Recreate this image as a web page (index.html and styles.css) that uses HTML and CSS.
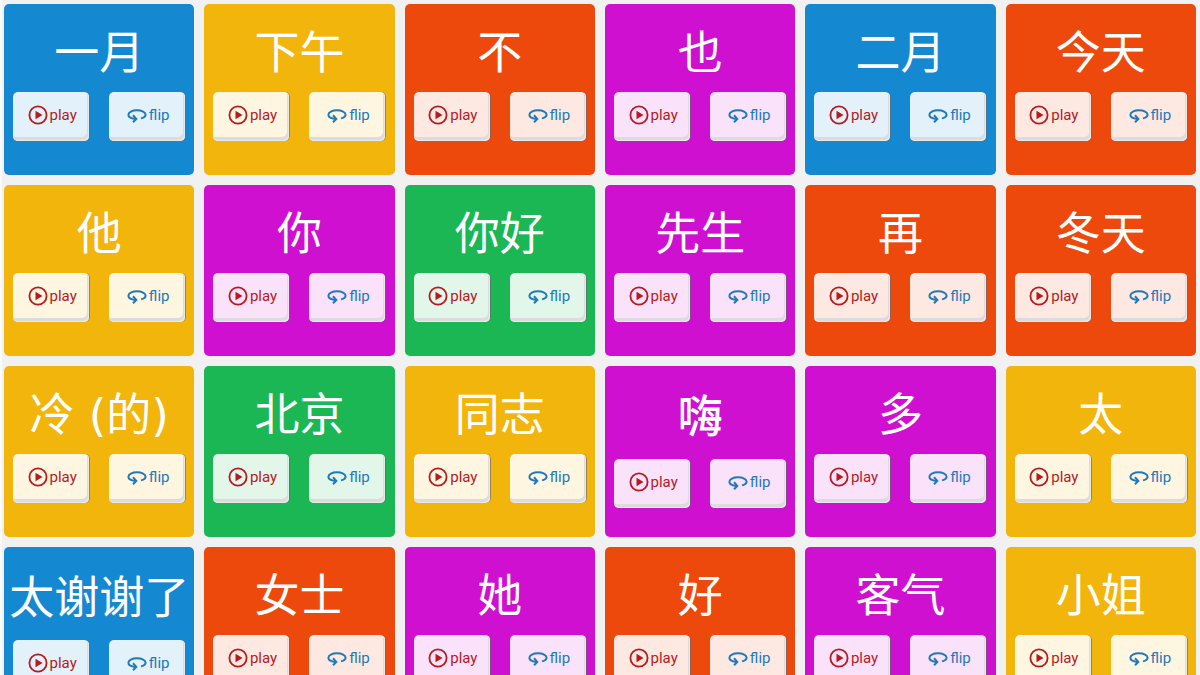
FILE: index.html
```
<!DOCTYPE html>
<html lang="zh-CN">
<head>
  <meta charset="UTF-8" />
  <meta name="viewport" content="width=device-width, initial-scale=1" />
  <title>Flashcards</title>
  <link rel="stylesheet" href="styles.css">
</head>
<body>

  <main id="cards" class="cards"></main>

  <script src="cards.js"></script>
</body>
</html>
```
FILE: styles.css
```
* {
  box-sizing: border-box;
}

body {
  margin: 0;
  background: #f1f1f1;
  border-left: 2px solid #fafafa;
  font-family: Roboto, "Noto Sans CJK SC", sans-serif;
}

.cards {
  display: grid;
  grid-template-columns: repeat(6, minmax(0, 1fr));
  gap: 10px;
  padding: 4px 4px 4px 2px;
}

.card {
  min-height: 171px;
  padding: 18px 9px;
  border-radius: 5px;
}

.blue {
  background: #1489d2;
}

.yellow {
  background: #f2b50c;
}

.red {
  background: #ee490c;
}

.purple {
  background: #d010d0;
}

.green {
  background: #1ab754;
}

.word {
  margin: 0 -9px 7px;
  color: #fff;
  font-family: "DejaVu Sans", "Noto Sans CJK SC", sans-serif;
  font-size: 45px;
  font-weight: 400;
  line-height: 63px;
  text-align: center;
  white-space: nowrap;
}

.word.tall {
  line-height: 68px;
}

.word.medium {
  font-weight: 500;
}

.actions {
  display: flex;
  justify-content: center;
  gap: 20px;
}

.btn {
  display: flex;
  align-items: center;
  justify-content: center;
  gap: 2px;
  width: 76px;
  height: 49px;
  padding: 0 0 3px 2px;
  border: none;
  border-radius: 5px;
  background: rgba(255, 255, 255, 0.88);
  box-shadow: inset -1px -1px 0 #e9e9e9, inset -2px -4px 0 #dcdcde, 1px 0 0 rgba(100, 100, 110, 0.6);
  font-family: inherit;
  font-size: 15px;
  cursor: pointer;
}

.btn svg {
  width: 20px;
  height: 20px;
}

.play {
  color: #b51a1f;
}

.flip {
  color: #2079b9;
}
```
FILE: cards.js
```
const words = [
  ["一月", "blue"], ["下午", "yellow"], ["不", "red"], ["也", "purple"], ["二月", "blue"], ["今天", "red"],
  ["他", "yellow"], ["你", "purple"], ["你好", "green"], ["先生", "purple"], ["再", "red"], ["冬天", "red"],
  ["冷 (的)", "yellow"], ["北京", "green"], ["同志", "yellow"], ["嗨", "purple", "tall medium"], ["多", "purple"], ["太", "yellow"],
  ["太谢谢了", "blue", "tall"], ["女士", "red"], ["她", "purple"], ["好", "red"], ["客气", "purple"], ["小姐", "yellow"]
];

const playIcon = `
  <svg viewBox="0 0 20 20" aria-hidden="true">
    <circle cx="10" cy="10" r="8.6" fill="none" stroke="currentColor" stroke-width="1.8"/>
    <path d="M7.500 5.800v8.400l7-4.200z" fill="currentColor"/>
  </svg>`;

const flipIcon = `
  <svg viewBox="0 0 20 20" aria-hidden="true" fill="none" stroke="currentColor" stroke-width="2">
    <path d="M14 13.400c3-.7 4.600-1.900 4.600-3.600 0-2.600-3.800-4.500-8.600-4.500S1.400 7.200 1.400 9.800c0 2.300 2.800 3.800 6.900 4.100"/>
    <path d="M6 10.300l3.300 3.600L6 17.300"/>
  </svg>`;

const list = document.getElementById("cards");

function renderCards() {
  list.innerHTML = words.map(([word, color, extra = ""]) => `
    <section class="card ${color}">
      <h2 class="word ${extra}">${word}</h2>
      <div class="actions">
        <button type="button" class="btn play">${playIcon}play</button>
        <button type="button" class="btn flip">${flipIcon}flip</button>
      </div>
    </section>
  `).join("");
}

renderCards();
```
